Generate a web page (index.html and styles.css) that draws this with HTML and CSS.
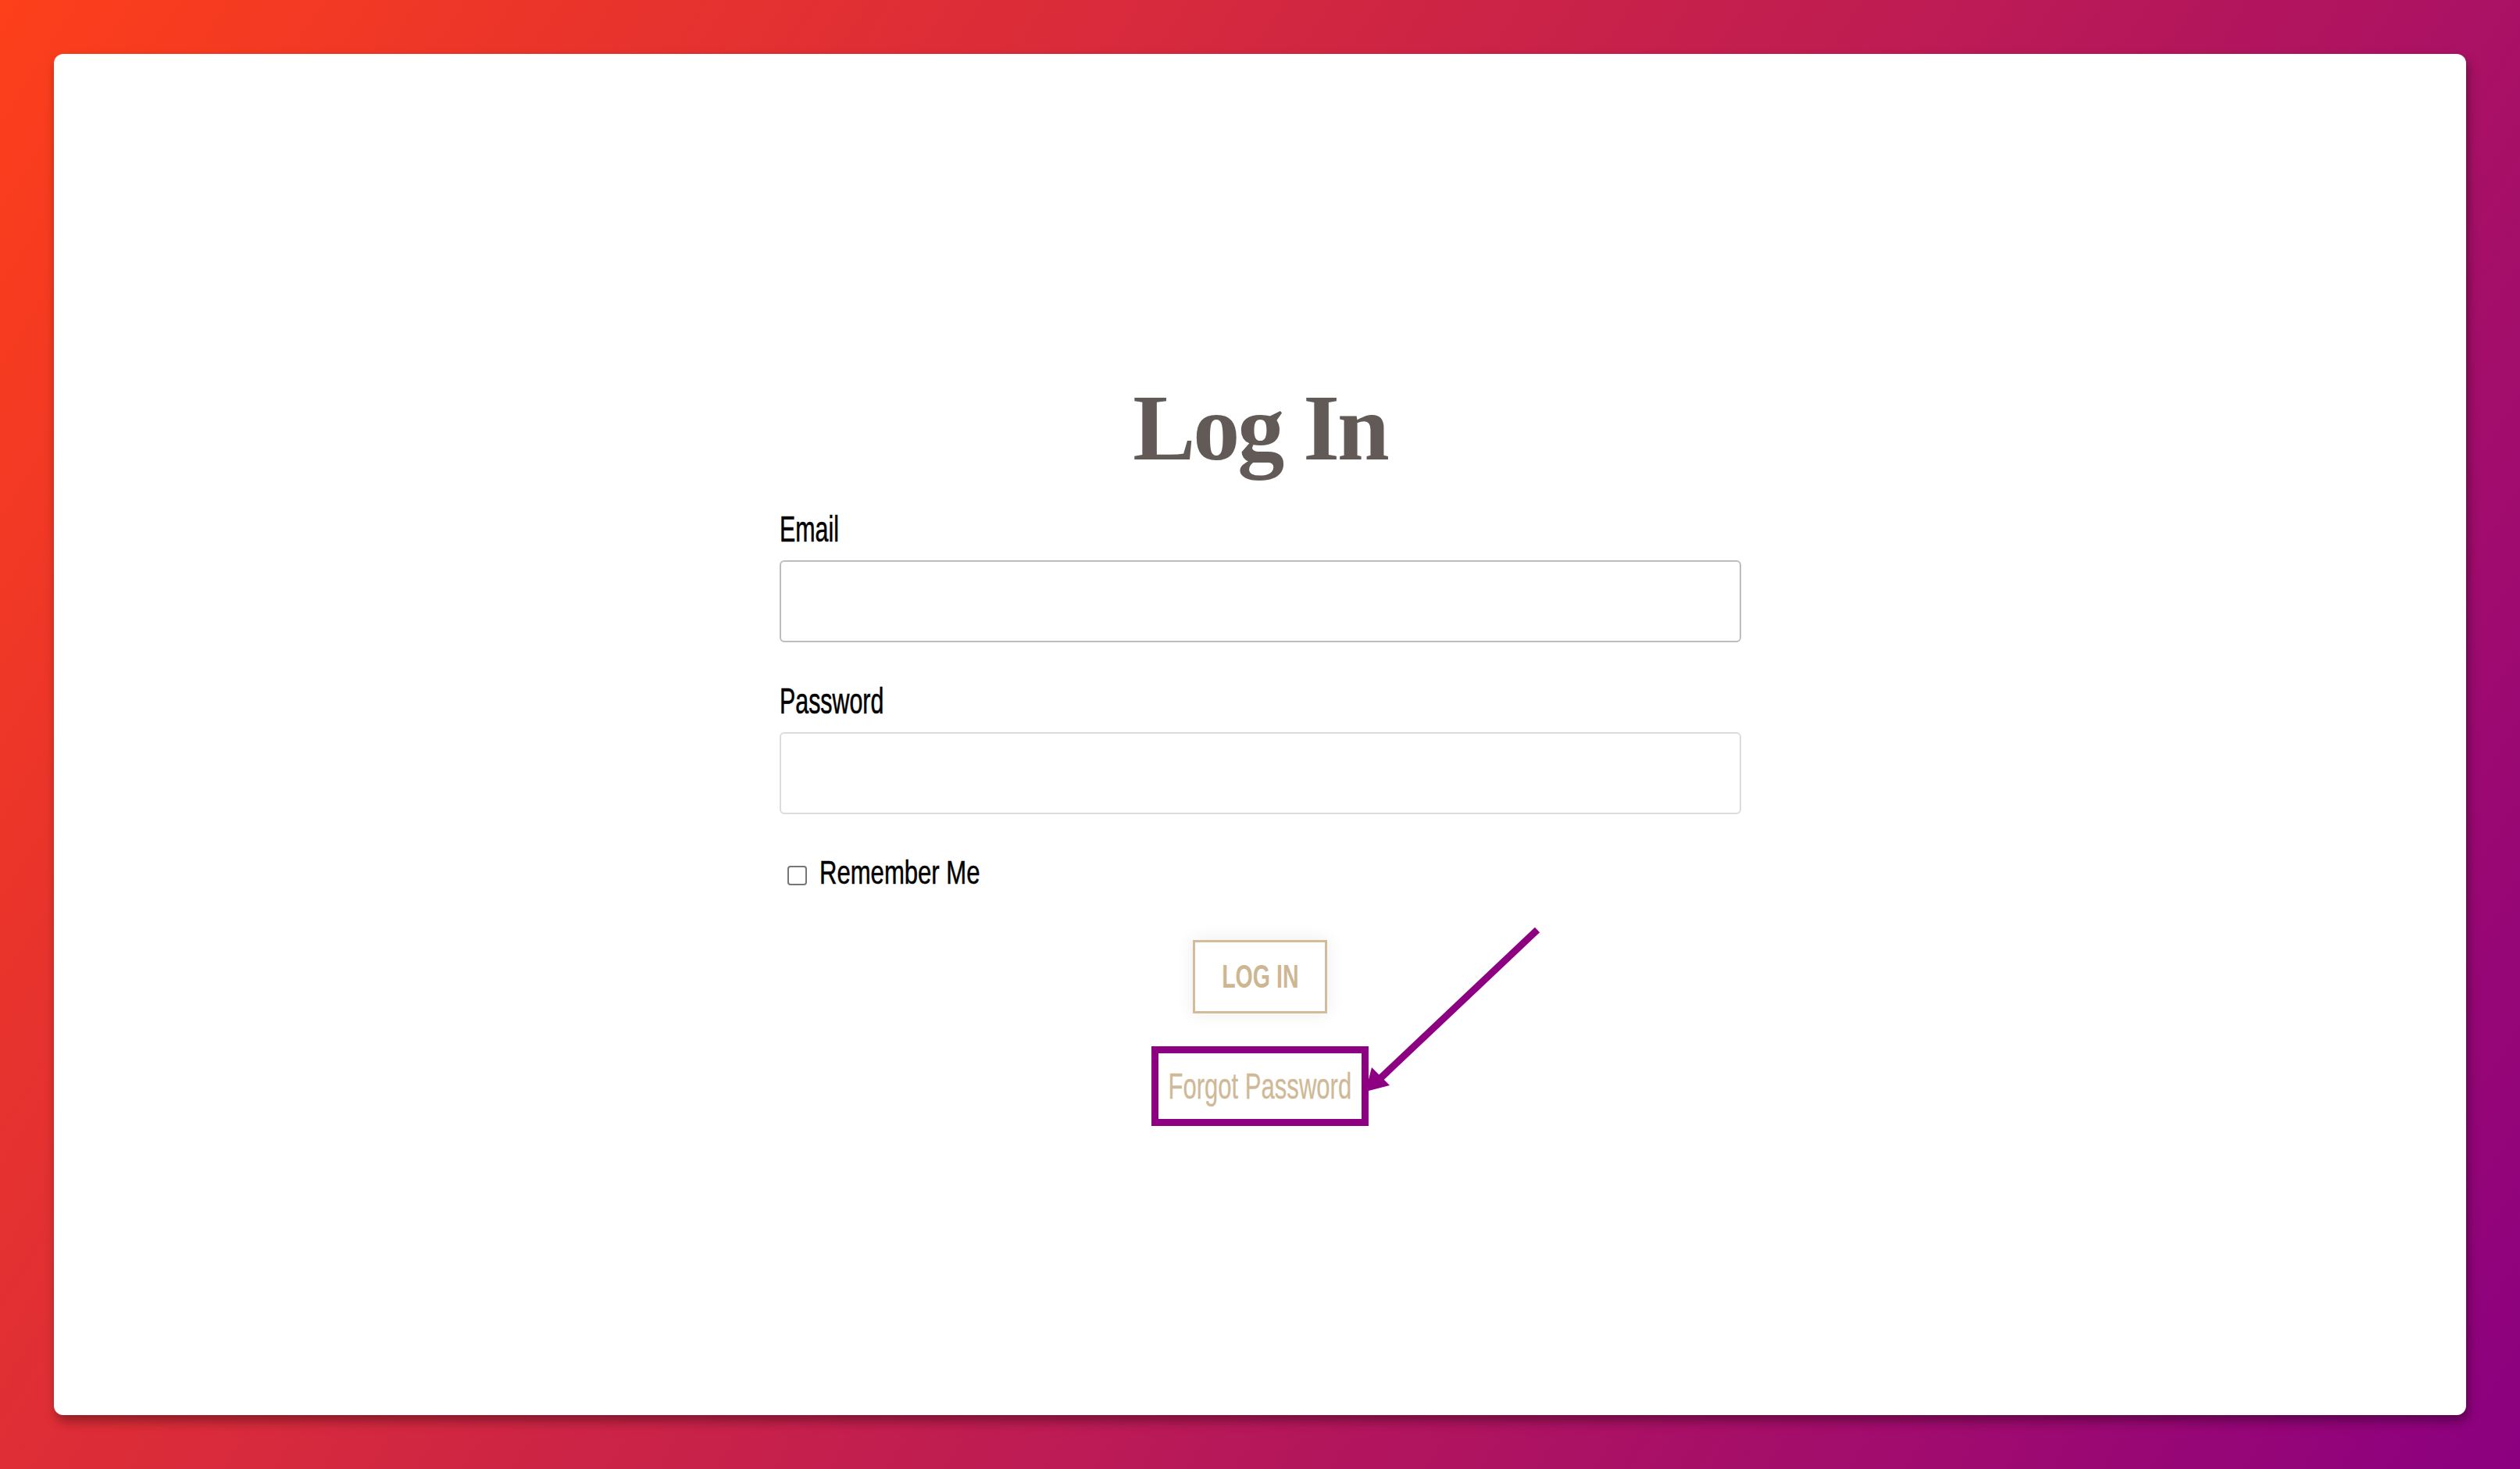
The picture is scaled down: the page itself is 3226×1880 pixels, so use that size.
FILE: index.html
```html
<!DOCTYPE html>
<html>
<head lang="en">
    <meta charset="UTF-8">
    <title>Log In</title>
    <link rel="stylesheet" href="styles.css">
</head>
<body>
<div class="card">
    <h1 class="title">Log In</h1>
    <form class="login">
        <label class="label" for="email"><span class="squeeze">Email</span></label>
        <input class="field field-dark" type="email" id="email">

        <label class="label label-gap" for="pwd"><span class="squeeze">Password</span></label>
        <input class="field" type="password" id="pwd">

        <div class="remember">
            <input class="check" type="checkbox" id="remember">
            <label for="remember"><span class="squeeze squeeze-wide">Remember Me</span></label>
        </div>

        <div class="actions">
            <a class="btn"><span class="squeeze-c">LOG IN</span></a>
            <a class="forgot">
                <span class="squeeze-c">Forgot Password</span>
                <svg class="arrow" width="245" height="230" viewBox="0 0 245 230">
                    <line x1="232" y1="12" x2="30" y2="203" stroke="#8c0081" stroke-width="9"/>
                    <polygon points="12,219 20,188 43,211" fill="#8c0081"/>
                </svg>
            </a>
        </div>
    </form>
</div>
</body>
</html>
```

FILE: styles.css
```css
* {
    margin: 0;
    padding: 0;
    box-sizing: border-box;
}

html, body {
    height: 100%;
}

body {
    padding: 69px;
    background: linear-gradient(122deg, #fd3f1a, #8c0080);
    font-family: "Liberation Sans", Arial, sans-serif;
}

.card {
    height: 1742px;
    background: #fff;
    border-radius: 12px;
    box-shadow: 3px 8px 14px rgba(0, 0, 0, .35);
    display: flex;
    flex-direction: column;
    align-items: center;
    padding-top: 419px;
}

.title {
    font-family: "Liberation Serif", "Times New Roman", serif;
    font-weight: bold;
    font-size: 120px;
    line-height: 120px;
    letter-spacing: -3px;
    color: #625a56;
}

.login {
    width: 1231px;
    margin-top: 41px;
    display: flex;
    flex-direction: column;
}

.label {
    display: block;
    font-size: 46px;
    line-height: 56px;
    color: #000;
    -webkit-text-stroke: .6px #000;
}

.label-gap {
    margin-top: 47px;
}

.squeeze {
    display: inline-block;
    transform: scaleX(.66);
    transform-origin: left center;
}

.squeeze-wide {
    transform: scaleX(.74);
}

.squeeze-c {
    display: inline-block;
    white-space: nowrap;
}

.field {
    margin-top: 12px;
    height: 105px;
    width: 100%;
    border: 2px solid #dcdcdc;
    border-radius: 6px;
    outline: none;
    background: #fff;
}

.field-dark {
    border-color: #bdbdbd;
}

.remember {
    margin-top: 47px;
    height: 56px;
    display: flex;
    align-items: center;
    padding-left: 10px;
    font-size: 42px;
    line-height: 56px;
    color: #000;
    -webkit-text-stroke: .5px #000;
}

.check {
    appearance: none;
    -webkit-appearance: none;
    width: 25px;
    height: 25px;
    border: 2px solid #767676;
    border-radius: 4px;
    margin: 6px 16px 0 0;
    background: #fff;
}

.actions {
    display: flex;
    flex-direction: column;
    align-items: center;
}

.btn {
    margin-top: 58px;
    width: 172px;
    height: 94px;
    border: 3px solid #d2bc9a;
    box-shadow: 0 0 22px rgba(0, 0, 0, .08);
    display: flex;
    align-items: center;
    justify-content: center;
    font-size: 42px;
    font-weight: bold;
    color: #cdb793;
}

.btn .squeeze-c {
    transform: scaleX(.68);
}

.forgot {
    position: relative;
    margin-top: 42px;
    width: 278px;
    height: 102px;
    border: 9px solid #8c0081;
    display: flex;
    align-items: center;
    justify-content: center;
    font-size: 46px;
    color: #cfb997;
    -webkit-text-stroke: .3px #cfb997;
}

.forgot .squeeze-c {
    transform: scaleX(.675);
}

.arrow {
    position: absolute;
    left: 100%;
    top: -170px;
    margin-left: -7px;
}
```
